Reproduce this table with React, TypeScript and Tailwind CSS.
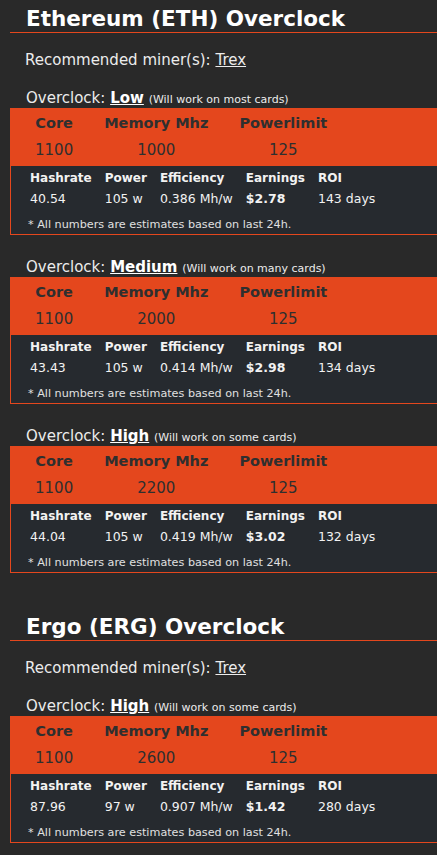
import React from "react";

type Tier = {
  level: string;
  note: string;
  core: string;
  memory: string;
  power: string;
  hashrate: string;
  watts: string;
  efficiency: string;
  earnings: string;
  roi: string;
};

const coins: { title: string; miner: string; tiers: Tier[] }[] = [
  {
    title: "Ethereum (ETH) Overclock",
    miner: "Trex",
    tiers: [
      {
        level: "Low",
        note: "(Will work on most cards)",
        core: "1100",
        memory: "1000",
        power: "125",
        hashrate: "40.54",
        watts: "105 w",
        efficiency: "0.386 Mh/w",
        earnings: "$2.78",
        roi: "143 days",
      },
      {
        level: "Medium",
        note: "(Will work on many cards)",
        core: "1100",
        memory: "2000",
        power: "125",
        hashrate: "43.43",
        watts: "105 w",
        efficiency: "0.414 Mh/w",
        earnings: "$2.98",
        roi: "134 days",
      },
      {
        level: "High",
        note: "(Will work on some cards)",
        core: "1100",
        memory: "2200",
        power: "125",
        hashrate: "44.04",
        watts: "105 w",
        efficiency: "0.419 Mh/w",
        earnings: "$3.02",
        roi: "132 days",
      },
    ],
  },
  {
    title: "Ergo (ERG) Overclock",
    miner: "Trex",
    tiers: [
      {
        level: "High",
        note: "(Will work on some cards)",
        core: "1100",
        memory: "2600",
        power: "125",
        hashrate: "87.96",
        watts: "97 w",
        efficiency: "0.907 Mh/w",
        earnings: "$1.42",
        roi: "280 days",
      },
    ],
  },
];

const TierBlock = ({ tier, first }: { tier: Tier; first: boolean }) => (
  <div className={first ? "mt-[18px]" : "mt-[22px]"}>
    <p className="h-[20px] pl-[16px] text-[15px] leading-[20px] text-[#ececec]">
      Overclock:{" "}
      <span className="font-bold underline text-white">{tier.level}</span>{" "}
      <span className="text-[11px] leading-none">{tier.note}</span>
    </p>
    <div className="bg-[#e4471d] pl-[25px] pt-[5px] pb-[6px] text-[#2f2f2f]">
      <div className="flex gap-[31px] leading-[20px]">
        <div className="flex flex-col items-center gap-[7px]">
          <span className="text-[14.5px] font-bold">Core</span>
          <span className="text-[15px]">{tier.core}</span>
        </div>
        <div className="flex flex-col items-center gap-[7px]">
          <span className="text-[14.5px] font-bold">Memory Mhz</span>
          <span className="text-[15px]">{tier.memory}</span>
        </div>
        <div className="flex flex-col items-center gap-[7px]">
          <span className="text-[14.5px] font-bold">Powerlimit</span>
          <span className="text-[15px]">{tier.power}</span>
        </div>
      </div>
    </div>
    <div className="bg-[#262a2f] border-l border-b border-[#e4471d] pl-[19px] pt-[3px] pb-[1px] text-[#f2f2f2]">
      <div className="grid grid-cols-[auto_auto_auto_auto_auto] justify-start gap-x-[13px] gap-y-[3px] leading-[18px]">
        <span className="text-[12px] font-bold">Hashrate</span>
        <span className="text-[12px] font-bold">Power</span>
        <span className="text-[12px] font-bold">Efficiency</span>
        <span className="text-[12px] font-bold">Earnings</span>
        <span className="text-[12px] font-bold">ROI</span>
        <span className="text-[12.5px]">{tier.hashrate}</span>
        <span className="text-[12.5px]">{tier.watts}</span>
        <span className="text-[12.5px]">{tier.efficiency}</span>
        <span className="text-[12.5px] font-bold">{tier.earnings}</span>
        <span className="text-[12.5px]">{tier.roi}</span>
      </div>
      <p className="mt-[9px] -ml-[2px] text-[11.2px] leading-[16px] text-[#e0e0e0]">
        * All numbers are estimates based on last 24h.
      </p>
    </div>
  </div>
);

export default function App() {
  return (
    <div
      className="min-h-screen bg-[#292929] pl-[10px] pt-[6px] pb-4 overflow-hidden"
      style={{ fontFamily: '"DejaVu Sans", Verdana, sans-serif' }}
    >
      {coins.map((coin, ci) => (
        <section key={coin.title} className={ci > 0 ? "mt-[41px]" : ""}>
          <h2 className="border-b border-[#e4471d] pl-[16px] text-[21.5px] font-bold leading-[26px] text-white">
            {coin.title}
          </h2>
          <p className="mt-[17px] pl-[15px] text-[15px] leading-[20px] text-[#ececec]">
            Recommended miner(s): <span className="underline">{coin.miner}</span>
          </p>
          {coin.tiers.map((tier, ti) => (
            <TierBlock key={tier.level} tier={tier} first={ti === 0} />
          ))}
        </section>
      ))}
    </div>
  );
}
